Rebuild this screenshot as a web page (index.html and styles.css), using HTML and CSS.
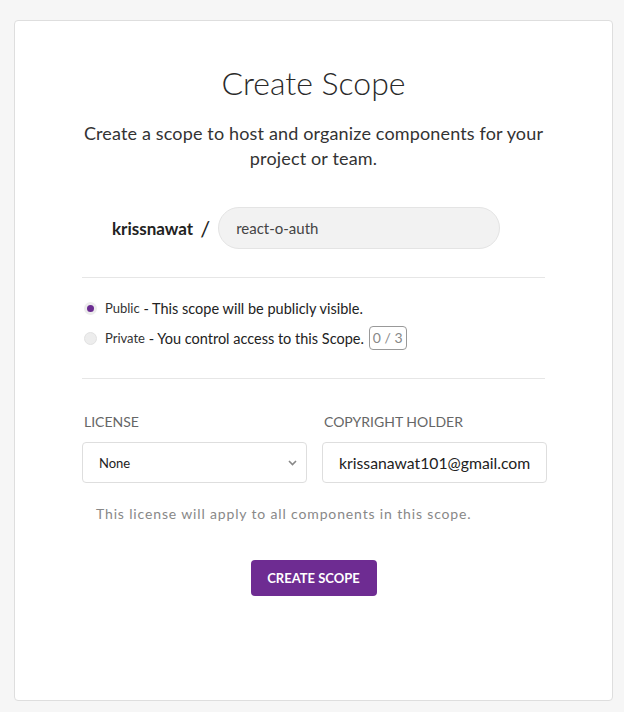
FILE: index.html
```html
<!DOCTYPE html>
<html lang="en">
<head>
<meta charset="utf-8">
<title>Create Scope</title>
<link rel="stylesheet" href="styles.css">
</head>
<body>
<div class="card">
  <h1 class="title">Create Scope</h1>
  <p class="subtitle">Create a scope to host and organize components for your project or team.</p>
  <div class="form">
    <div class="name-row">
      <span class="owner">krissnawat</span>
      <span class="slash">/</span>
      <div class="name-input">react-o-auth</div>
    </div>
    <hr class="divider divider-top">
    <div class="radios">
      <div class="radio-row">
        <span class="radio radio-on"><span class="dot"></span></span>
        <span class="radio-label">Public</span>
        <span class="radio-desc">&nbsp;- This scope will be publicly visible.</span>
      </div>
      <div class="radio-row">
        <span class="radio radio-off"></span>
        <span class="radio-label">Private</span>
        <span class="radio-desc">&nbsp;- You control access to this Scope.</span>
        <span class="counter">0 / 3</span>
      </div>
    </div>
    <hr class="divider divider-bottom">
    <div class="fields">
      <div class="field">
        <div class="label">LICENSE</div>
        <div class="select">
          <span>None</span>
          <svg class="chevron" width="9" height="6" viewBox="0 0 9 6"><path d="M1 1l3.5 3.5L8 1" fill="none" stroke="#888" stroke-width="1.6"/></svg>
        </div>
      </div>
      <div class="field">
        <div class="label">COPYRIGHT HOLDER</div>
        <div class="text-input">krissanawat101@gmail.com</div>
      </div>
    </div>
    <p class="help">This license will apply to all components in this scope.</p>
    <div class="actions">
      <button class="btn">CREATE SCOPE</button>
    </div>
  </div>
</div>
</body>
</html>
```

FILE: styles.css
```css
* { box-sizing: border-box; }
html, body { margin: 0; padding: 0; }
body {
  background: #f6f6f6;
  font-family: Lato, "Open Sans", Arial, sans-serif;
  color: #2b2b2b;
}
.card {
  margin: 20px 11px 11px 14px;
  width: 599px;
  height: 681px;
  background: #fff;
  border: 1px solid #dedede;
  border-radius: 4px;
  padding-top: 42px;
}
.title {
  margin: 0;
  text-align: center;
  font-size: 32px;
  line-height: 40px;
  font-weight: 300;
  color: #2a2a2a;
}
.subtitle {
  margin: 18px auto 0;
  width: 480px;
  text-align: center;
  font-size: 18px;
  letter-spacing: 0.15px;
  line-height: 25px;
  color: #333;
}
.form {
  width: 463px;
  margin: 0 auto;
}
.name-row {
  margin-top: 36px;
  display: flex;
  align-items: center;
  padding-left: 30px;
  height: 42px;
}
.owner {
  font-weight: 700;
  font-size: 17px;
  color: #222;
}
.slash {
  font-size: 22px;
  margin: 0 8px 0 7px;
  color: #222;
}
.name-input {
  width: 282px;
  height: 42px;
  border-radius: 21px;
  border: 1px solid #e4e4e4;
  background: #f2f2f2;
  font-size: 15px;
  line-height: 40px;
  padding-left: 17px;
  color: #444;
}
.divider {
  border: 0;
  border-top: 1px solid #e6e6e6;
  margin: 0;
}
.divider-top { margin-top: 28px; }
.divider-bottom { margin-top: 25px; }
.radios { margin-top: 15px; }
.radio-row {
  height: 30px;
  display: flex;
  align-items: center;
}
.radio {
  width: 13px;
  height: 13px;
  border-radius: 50%;
  margin-left: 2px;
  margin-right: 8px;
  display: flex;
  align-items: center;
  justify-content: center;
}
.radio-on { background: #ececec; }
.radio-on .dot {
  width: 7px;
  height: 7px;
  border-radius: 50%;
  background: #6b2c91;
}
.radio-off { background: #ededed; border: 1px solid #e2e2e2; }
.radio-label {
  font-size: 13px;
  color: #333;
}
.radio-desc {
  font-size: 14.5px;
  color: #222;
}
.counter {
  margin-left: 5px;
  border: 1px solid #999;
  border-radius: 4px;
  font-size: 14px;
  color: #888;
  height: 24px;
  line-height: 22px;
  padding: 0 3px;
}
.fields {
  margin-top: 33px;
  display: grid;
  grid-template-columns: 225px 225px;
  column-gap: 15px;
}
.label {
  font-size: 14px;
  line-height: 20px;
  color: #666;
  margin-left: 2px;
  margin-bottom: 10px;
}
.select, .text-input {
  height: 41px;
  border: 1px solid #dedede;
  border-radius: 4px;
  display: flex;
  align-items: center;
  padding: 0 16px;
}
.select {
  justify-content: space-between;
  font-size: 13px;
  color: #222;
  padding-right: 9px;
}
.text-input {
  font-size: 15.75px;
  color: #222;
}
.help {
  margin: 21px 0 0 14px;
  font-size: 14px;
  letter-spacing: 0.85px;
  line-height: 20px;
  color: #888;
}
.actions {
  margin-top: 36px;
  display: flex;
  justify-content: center;
}
.btn {
  width: 126px;
  height: 36px;
  border: 0;
  border-radius: 4px;
  background: #6e2c92;
  color: #fff;
  font-family: Lato, Arial, sans-serif;
  font-weight: 700;
  font-size: 13px;
  letter-spacing: 0;
  cursor: pointer;
}
```
